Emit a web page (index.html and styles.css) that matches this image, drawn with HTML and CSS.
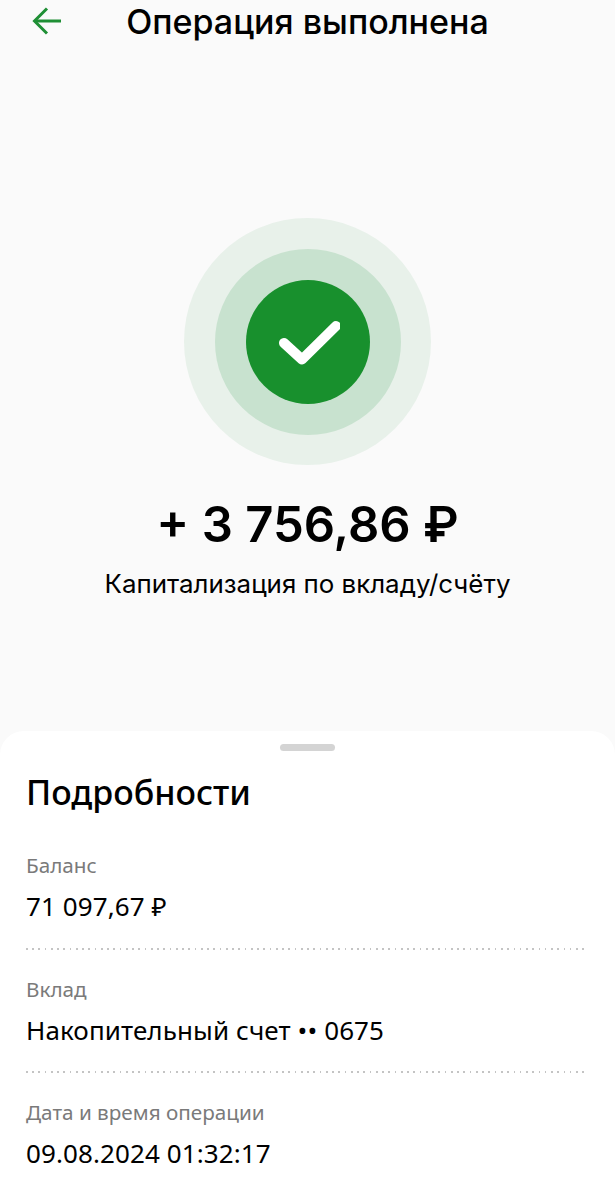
FILE: index.html
```html
<!DOCTYPE html>
<html lang="ru">
<head>
<meta charset="utf-8">
<title>Операция выполнена</title>
<link rel="stylesheet" href="styles.css">
</head>
<body>
<div class="screen">
  <section class="top">
    <header class="header">
      <svg class="back" width="30" height="28" viewBox="0 0 30 28" fill="none" stroke="#1f8f35" stroke-width="3"><path d="M29 14H3"/><path d="M15 1.5 2.5 14 15 26.5"/></svg>
      <h1 class="title">Операция выполнена</h1>
    </header>
    <div class="ring-outer"><div class="ring-mid"><div class="ring-core">
      <svg width="64" height="48" viewBox="0 0 64 48" fill="none" stroke="#fff" stroke-width="10" stroke-linecap="round" stroke-linejoin="round"><path d="M8 25 26 41.5 60 8"/></svg>
    </div></div></div>
    <div class="amount">+ 3 756,86 ₽</div>
    <div class="caption">Капитализация по вкладу/счёту</div>
  </section>
  <section class="sheet">
    <div class="handle"></div>
    <h2 class="sheet-title">Подробности</h2>
    <div class="row">
      <div class="label">Баланс</div>
      <div class="value">71 097,67 ₽</div>
    </div>
    <div class="dots"></div>
    <div class="row">
      <div class="label">Вклад</div>
      <div class="value">Накопительный счет •• 0675</div>
    </div>
    <div class="dots"></div>
    <div class="row">
      <div class="label">Дата и время операции</div>
      <div class="value">09.08.2024 01:32:17</div>
    </div>
  </section>
</div>
</body>
</html>
```
FILE: styles.css
```css
* { box-sizing: border-box; margin: 0; padding: 0; }
html, body { height: 100%; }
body { background: #fafafa; font-family: "Noto Sans", "Open Sans", sans-serif; color: #000; overflow: hidden; }
.screen { height: 1200px; display: flex; flex-direction: column; }
.top { height: 731px; display: flex; flex-direction: column; align-items: center; }
.header { position: relative; width: 100%; height: 44px; display: flex; justify-content: center; }
.back { position: absolute; left: 32px; top: 7px; }
.title { font-family: Inter, sans-serif; font-size: 34px; font-weight: 500; line-height: 44px; }
.ring-outer { margin-top: 174px; width: 247px; height: 247px; border-radius: 50%; background: #e8f1ea; display: flex; align-items: center; justify-content: center; }
.ring-mid { width: 186px; height: 186px; border-radius: 50%; background: #c8e2cf; display: flex; align-items: center; justify-content: center; }
.ring-core { width: 124px; height: 124px; border-radius: 50%; background: #18902d; display: flex; align-items: center; justify-content: center; }
.amount { margin-top: 26px; font-family: Inter, sans-serif; font-size: 49px; font-weight: 600; line-height: 68px; }
.caption { margin-top: 8px; font-family: Inter, sans-serif; font-size: 25.9px; line-height: 34px; }
.sheet { flex: 1; background: #fff; border-radius: 24px 24px 0 0; padding: 13px 29px 0 26px; display: flex; flex-direction: column; }
.handle { align-self: center; width: 55px; height: 7px; border-radius: 4px; background: #d4d4d4; margin-left: 3px; }
.sheet-title { margin-top: 18px; font-size: 34px; font-weight: 500; line-height: 46px; }
.row { padding: 36px 0 25px; }
.dots + .row { padding: 25px 0 24px; }
.label { font-size: 20.7px; line-height: 28px; color: #7a7a7a; }
.value { margin-top: 10px; font-size: 26px; letter-spacing: 0.1px; line-height: 34px; }
.dots { height: 2px; background: repeating-linear-gradient(90deg, #c4c4c4 0 1.6px, transparent 1.6px 6.25px); }
```
